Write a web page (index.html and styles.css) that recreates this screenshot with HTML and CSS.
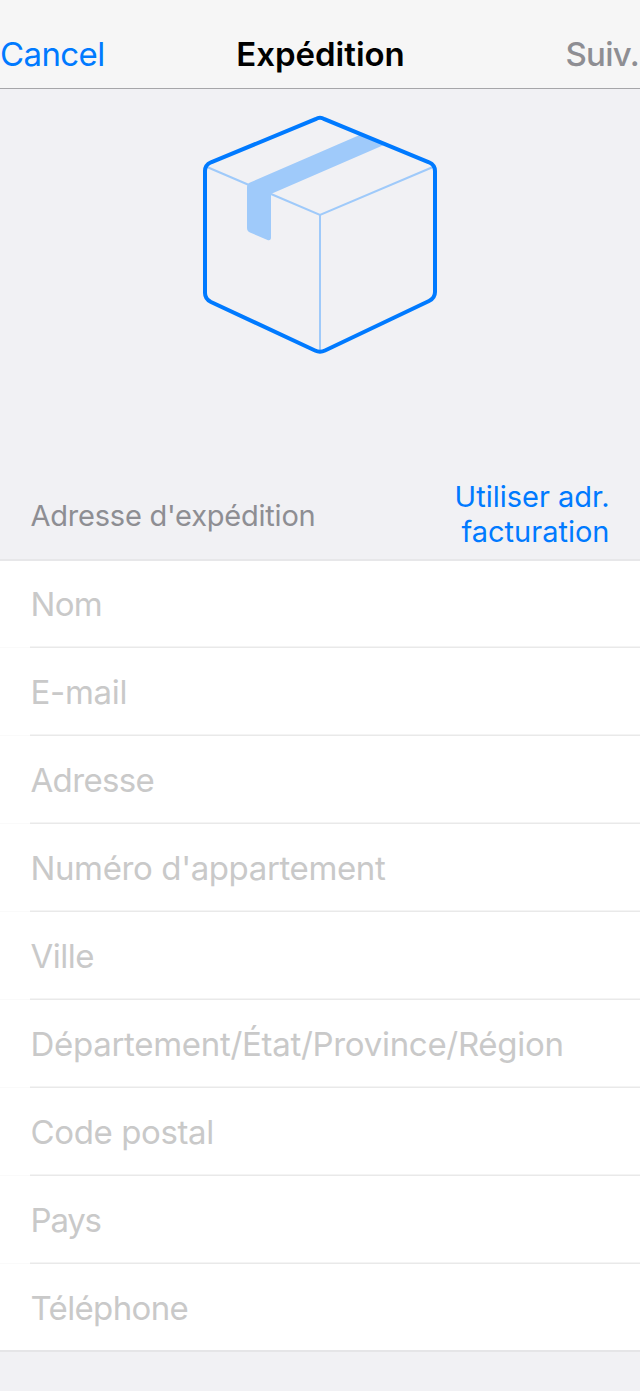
FILE: index.html
```html
<!DOCTYPE html>
<html lang="fr">
<head>
<meta charset="utf-8">
<title>Expédition</title>
<link rel="stylesheet" href="styles.css">
</head>
<body>
<header class="navbar">
  <a class="nav-cancel">Cancel</a>
  <h1 class="nav-title">Expédition</h1>
  <a class="nav-next">Suiv.</a>
</header>
<div class="hero">
  <svg class="box" width="240" height="242" viewBox="200 114 240 242" fill="none">
    <path d="M247 187Q247 184 250 182.500L362 134L385 144.500L272 193.500L271 195V237.500Q271 241 267.500 240L250 232.500Q247 231 247 228Z" fill="#9fcafa"/>
    <path d="M207 167L249 185M271 194L320 215L433 167M320 215V350" stroke="#9fcafa" stroke-width="2"/>
    <path d="M315.500 119.200Q320 116.500 324.500 119.200L429 162.300Q435 165 435 171V292Q435 298 429 301L325 350.500Q320 353 315 350.500L211 302Q205 299 205 293V171Q205 165 211 162.300Z" stroke="#007aff" stroke-width="4"/>
  </svg>
</div>
<section class="section-head">
  <h2 class="section-title">Adresse d'expédition</h2>
  <a class="use-billing">Utiliser adr.<br>facturation</a>
</section>
<ul class="form">
  <li class="row"><span class="tighter">Nom</span></li>
  <li class="row"><span class="loose">E-mail</span></li>
  <li class="row"><span class="tighter">Adresse</span></li>
  <li class="row"><span class="normal">Numéro d'appartement</span></li>
  <li class="row"><span class="tight">Ville</span></li>
  <li class="row"><span class="loose">Département/État/Province/Région</span></li>
  <li class="row"><span class="normal">Code postal</span></li>
  <li class="row"><span class="tightest">Pays</span></li>
  <li class="row"><span class="tighter">Téléphone</span></li>
</ul>
<footer class="footer"></footer>
</body>
</html>
```
FILE: styles.css
```css
* { box-sizing: border-box; margin: 0; padding: 0; }
body { width: 640px; height: 1392px; overflow: hidden; background: #f1f1f4; font-family: Inter, sans-serif; font-size: 33px; }
.navbar { height: 89px; padding: 34px 1px 0 0; display: grid; grid-template-columns: 1fr auto 1fr; background: #f6f6f6; border-bottom: 1px solid #a6a6a9; line-height: 40px; }
.nav-cancel { color: #007aff; letter-spacing: -0.6px; }
.nav-title { font-size: 33px; font-weight: 600; color: #000; padding-left: 2px; }
.nav-next { color: #8e8e93; font-weight: 500; text-align: right; letter-spacing: -0.7px; }
.hero { height: 381px; padding-top: 25px; display: flex; justify-content: center; align-items: flex-start; }
.section-head { height: 89px; padding: 9px 30.5px 0; display: flex; justify-content: space-between; }
.section-title { font-size: 29px; font-weight: 400; color: #8e8e93; line-height: 74px; letter-spacing: -0.22px; }
.use-billing { font-size: 29px; color: #007aff; line-height: 35px; text-align: right; }
.form { list-style: none; background: #fff; border-top: 2px solid #e7e7e9; border-bottom: 2px solid #e5e5e7; }
.row { height: 88px; padding-left: 30.5px; line-height: 88px; color: #c9c9c9; white-space: nowrap; background: linear-gradient(#f4f4f4 50%, #e9e9e9 50%) 30px 100% / 610px 2px no-repeat, linear-gradient(#fafafa, #fafafa) 0 100% / 30px 1px no-repeat; }
.row:first-child { height: 87px; line-height: 86px; }
.row:last-child { height: 86px; background: none; }
.loose { letter-spacing: -0.3px; }
.normal { letter-spacing: -0.38px; }
.tight { letter-spacing: -0.5px; }
.tighter { letter-spacing: -0.65px; }
.tightest { letter-spacing: -1.2px; }
.footer { height: 40px; border-bottom: 1px solid #fff; }
```
